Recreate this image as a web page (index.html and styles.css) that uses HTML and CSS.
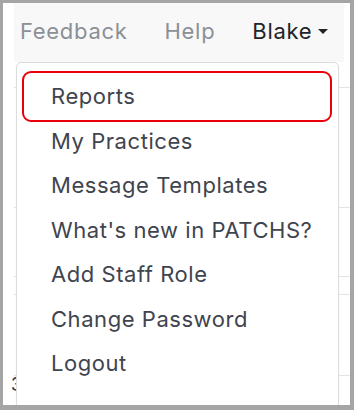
FILE: index.html
```html
<!DOCTYPE html>
<html lang="en">
<head>
  <meta charset="UTF-8" />
  <meta name="viewport" content="width=device-width, initial-scale=1.0"/>
  <title>PATCHS</title>
  <link rel="stylesheet" href="styles.css">
</head>
<body>
  <div class="frame">
    <header class="topbar">
      <nav class="nav">
        <a href="#" class="nav-link">Feedback</a>
        <a href="#" class="nav-link">Help</a>
        <a href="#" class="nav-link user">Blake <span class="caret"></span></a>
      </nav>
    </header>

    <!-- page content behind the open menu -->
    <div class="content">
      <div class="row r1"></div>
      <div class="row r2"></div>
      <div class="row r3"></div>
      <div class="row r4"></div>
      <div class="row r5"><span class="peek-left">3</span></div>
    </div>

    <ul class="dropdown">
      <li class="item highlight">Reports</li>
      <li class="item">My Practices</li>
      <li class="item">Message Templates</li>
      <li class="item">What's new in PATCHS?</li>
      <li class="item">Add Staff Role</li>
      <li class="item">Change Password</li>
      <li class="item">Logout</li>
    </ul>
  </div>
</body>
</html>
```

FILE: styles.css
```css
body {
  margin: 0;
  background: #a5a5a5;
  font-family: Inter, "Open Sans", sans-serif;
}
.frame {
  position: relative;
  margin: 3px 4px 0 3px;
  width: 347px;
  height: 402px;
  background: white;
  overflow: hidden;
}
.topbar {
  margin-left: 11px;
  width: 330px;
  height: 59px;
  background: #f8f8f9;
  display: flex;
  align-items: center;
}
.nav {
  display: flex;
  gap: 37px;
  padding-left: 6px;
  padding-bottom: 4px;
}
.nav-link {
  color: #8b9096;
  text-decoration: none;
  font-size: 22px;
  letter-spacing: 0.7px;
}
.nav-link.user {
  color: #212428;
  display: flex;
  align-items: center;
  gap: 6px;
}
.caret {
  width: 0;
  height: 0;
  border-left: 5px solid transparent;
  border-right: 5px solid transparent;
  border-top: 5px solid #212428;
  margin-top: 2px;
}
.content {
  margin-left: 11px;
  width: 336px;
}
.row {
  border-bottom: 1px solid #e4e4e4;
}
.r1 { height: 25px; }
.r2 { height: 119px; }
.r3 { height: 68px; }
.r4 { height: 17px; }
.r5 {
  height: 80px;
  position: relative;
}
.peek-left {
  position: absolute;
  left: -3px;
  top: 81px;
  font-size: 18px;
  line-height: 18px;
  color: #333;
}
.dropdown {
  position: absolute;
  top: 59px;
  left: 13px;
  width: 321px;
  height: 333px;
  margin: 0;
  padding: 11px 0 0;
  list-style: none;
  background: white;
  border: 1px solid #dcdcdc;
  border-radius: 5px;
  box-shadow: 0 1px 2px rgba(0, 0, 0, 0.06);
}
.item {
  position: relative;
  height: 44.5px;
  line-height: 44.5px;
  padding-left: 34px;
  font-size: 22px;
  color: #40444e;
  letter-spacing: 0.55px;
}
.highlight::after {
  content: "";
  position: absolute;
  left: 5px;
  right: 6px;
  top: -3px;
  bottom: -3.5px;
  border: 2px solid #e8000b;
  border-radius: 9px;
}
```
